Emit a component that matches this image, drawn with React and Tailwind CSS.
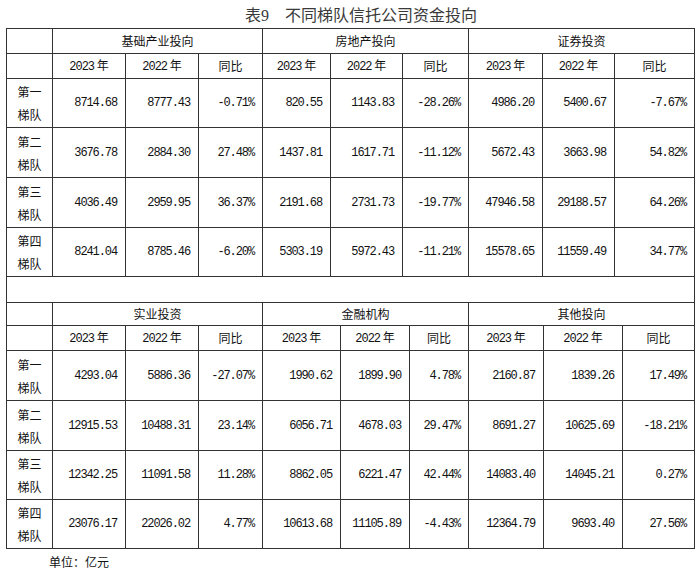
import React from "react";

const t1 = {
  heads: ["基础产业投向", "房地产投向", "证券投资"],
  rows: [
    ["第一", ["8714.68", "8777.43", "-0.71%", "820.55", "1143.83", "-28.26%", "4986.20", "5400.67", "-7.67%"]],
    ["第二", ["3676.78", "2884.30", "27.48%", "1437.81", "1617.71", "-11.12%", "5672.43", "3663.98", "54.82%"]],
    ["第三", ["4036.49", "2959.95", "36.37%", "2191.68", "2731.73", "-19.77%", "47946.58", "29188.57", "64.26%"]],
    ["第四", ["8241.04", "8785.46", "-6.20%", "5303.19", "5972.43", "-11.21%", "15578.65", "11559.49", "34.77%"]],
  ],
};

const t2 = {
  heads: ["实业投资", "金融机构", "其他投向"],
  rows: [
    ["第一", ["4293.04", "5886.36", "-27.07%", "1990.62", "1899.90", "4.78%", "2160.87", "1839.26", "17.49%"]],
    ["第二", ["12915.53", "10488.31", "23.14%", "6056.71", "4678.03", "29.47%", "8691.27", "10625.69", "-18.21%"]],
    ["第三", ["12342.25", "11091.58", "11.28%", "8862.05", "6221.47", "42.44%", "14083.40", "14045.21", "0.27%"]],
    ["第四", ["23076.17", "22026.02", "4.77%", "10613.68", "11105.89", "-4.43%", "12364.79", "9693.40", "27.56%"]],
  ],
};

const cell = "border-r border-b border-[#333]";
const cjk = "font-['Noto_Sans_CJK_SC',sans-serif]";
const mono = "font-['Liberation_Mono','Noto_Sans_CJK_SC',monospace]";

function Table({ data, cols, rows, top }) {
  return (
    <div className={`grid w-[689px] border-l border-[#333] ${top ? "border-t" : ""} ${cols} ${rows} text-[12px] text-[#111]`}>
      <div className={cell}></div>
      {data.heads.map((h) => (
        <div key={h} className={`${cell} col-span-3 flex items-center justify-center ${cjk}`}>{h}</div>
      ))}
      <div className={cell}></div>
      {[0, 1, 2].map((g) =>
        ["2023 年", "2022 年", "同比"].map((h) => (
          <div key={g + h} className={`${cell} flex items-center justify-center ${h === "同比" ? cjk : mono} whitespace-pre`}>
            {h === "同比" ? h : (
              <span>
                <span className="tracking-[-1px]">{h.slice(0, 4)}</span>
                <span className={cjk}> 年</span>
              </span>
            )}
          </div>
        ))
      )}
      {data.rows.map(([label, vals]) => (
        <React.Fragment key={label}>
          <div className={`${cell} flex flex-col items-center justify-center leading-[23px] ${cjk}`}>
            <span>{label}</span>
            <span>梯队</span>
          </div>
          {vals.map((v, i) => (
            <div key={i} className={`${cell} flex items-center justify-end pr-[8px] ${mono} tracking-[-1.1px]`}>{v}</div>
          ))}
        </React.Fragment>
      ))}
    </div>
  );
}

export default function App() {
  return (
    <div className="w-[700px] h-[570px] bg-white overflow-hidden">
      <div className="h-[28px] pt-[3px] pl-[245px] leading-[26px] text-[16px] text-[#3a3a3a] font-['Liberation_Serif','Noto_Sans_CJK_SC',serif] whitespace-pre">
        表9　不同梯队信托公司资金投向
      </div>
      <div className="ml-[6px]">
        <Table
          data={t1}
          top
          cols="grid-cols-[46px_73px_73px_64px_68px_72px_66px_74px_72px_80px]"
          rows="grid-rows-[25px_25px_49px_50px_50px_49px]"
        />
        <div className="h-[25px] w-[689px] border-l border-r border-[#333]"></div>
        <Table
          data={t2}
          top
          cols="grid-cols-[46px_73px_73px_64px_78px_69px_59px_75px_79px_72px]"
          rows="grid-rows-[23px_25px_50px_50px_49px_49px]"
        />
      </div>
      <div className={`pl-[49px] mt-[5px] leading-[16px] text-[12px] text-[#111] ${cjk}`}>单位：亿元</div>
    </div>
  );
}
